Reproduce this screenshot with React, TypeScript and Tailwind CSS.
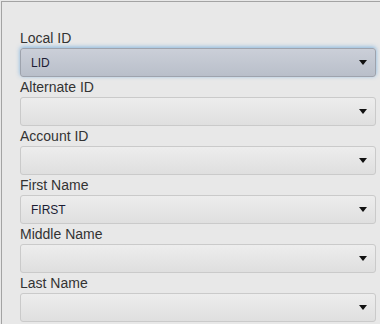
const FIELDS = [
  { label: 'Local ID', value: 'LID', focused: true },
  { label: 'Alternate ID', value: '' },
  { label: 'Account ID', value: '' },
  { label: 'First Name', value: 'FIRST' },
  { label: 'Middle Name', value: '' },
  { label: 'Last Name', value: '' },
]

function Arrow() {
  return (
    <svg width="8" height="5" viewBox="0 0 8 5" className="shrink-0">
      <polygon points="0,0 8,0 4,5" fill="#111" />
    </svg>
  )
}

export default function App() {
  return (
    <div className="h-[324px] w-[380px] overflow-hidden bg-[#e8e8e8] pl-px pt-px font-['Liberation_Sans',Arial,sans-serif]">
      <div className="h-full border-l border-t border-[#a3a3a3] bg-[#e8e8e8] pl-[18px] pr-[4px] pt-[26px]">
        {FIELDS.map((f) => (
          <div key={f.label}>
            <div className="h-5 text-[14px] leading-5 text-[#333]">{f.label}</div>
            <div
              className={
                f.focused
                  ? 'flex h-[29px] items-center justify-between rounded-[3px] border border-[#9ea3ad] bg-gradient-to-b from-[#cbcfd8] to-[#b9bfca] pl-[10px] pr-[8px] shadow-[0_-1px_4px_rgba(90,160,220,0.7)]'
                  : 'flex h-[29px] items-center justify-between rounded-[3px] border border-[#cacaca] bg-gradient-to-b from-[#ededed] to-[#dfdfdf] pl-[10px] pr-[8px]'
              }
            >
              <span className="text-[12px] text-[#1c1c34]">{f.value}</span>
              <Arrow />
            </div>
          </div>
        ))}
      </div>
    </div>
  )
}
